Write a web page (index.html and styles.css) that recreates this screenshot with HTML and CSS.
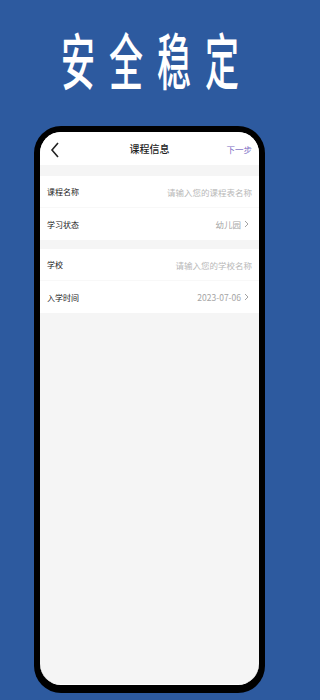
FILE: index.html
```html
<!DOCTYPE html>
<html lang="zh">
<head>
<meta charset="utf-8">
<title>课程信息</title>
<link rel="stylesheet" href="styles.css">
</head>
<body>
<div class="page">
  <header class="hero">
    <h1 class="hero-title">安全稳定</h1>
  </header>
  <div class="phone">
    <div class="screen">
      <div class="nav">
        <svg class="back" width="10" height="16" viewBox="0 0 10 16"><polyline points="8,1 2,8 8,15" fill="none" stroke="#222" stroke-width="1.6" stroke-linejoin="miter"/></svg>
        <div class="nav-title">课程信息</div>
        <div class="nav-next">下一步</div>
      </div>
      <div class="group">
        <div class="row"><span class="label">课程名称</span><span class="placeholder">请输入您的课程表名称</span></div>
        <div class="row"><span class="label">学习状态</span><span class="value">幼儿园<svg class="chev" width="5" height="8" viewBox="0 0 5 8"><polyline points="1,1 4,4 1,7" fill="none" stroke="#999" stroke-width="0.9"/></svg></span></div>
      </div>
      <div class="group">
        <div class="row"><span class="label">学校</span><span class="placeholder">请输入您的学校名称</span></div>
        <div class="row"><span class="label">入学时间</span><span class="value">2023-07-06<svg class="chev" width="5" height="8" viewBox="0 0 5 8"><polyline points="1,1 4,4 1,7" fill="none" stroke="#999" stroke-width="0.9"/></svg></span></div>
      </div>
    </div>
  </div>
</div>
</body>
</html>
```

FILE: styles.css
```css
html, body {
  margin: 0;
  padding: 0;
}
body {
  background: #2d5a9f;
  font-family: "Noto Sans CJK SC", "Noto Sans", sans-serif;
  width: 300px;
  height: 700px;
  overflow: hidden;
}
.page {
  display: flex;
  flex-direction: column;
  height: 700px;
}
.hero {
  height: 126px;
  display: flex;
  justify-content: center;
  align-items: flex-start;
}
.hero-title {
  margin: 29px 0 0 0;
  padding-left: 14px;
  font-size: 34px;
  line-height: 34px;
  font-weight: 500;
  color: #ffffff;
  letter-spacing: 14px;
  transform: scaleY(1.8);
  transform-origin: center top;
}
.phone {
  margin: 0 35px 7px 34px;
  flex: 1;
  background: #000;
  border-radius: 27px;
  padding: 6px 6px 8px 6px;
  display: flex;
}
.screen {
  flex: 1;
  background: #f5f5f5;
  border-radius: 21px;
  overflow: hidden;
  display: flex;
  flex-direction: column;
  border-bottom: 1px solid #fff;
}
.nav {
  height: 33px;
  background: #fff;
  display: flex;
  align-items: center;
  justify-content: space-between;
  padding: 0 7px 0 10px;
  position: relative;
}
.back {
  display: block;
  margin-top: 2px;
}
.nav-title {
  position: absolute;
  left: 0;
  right: 0;
  text-align: center;
  font-size: 10px;
  font-weight: 500;
  color: #222;
  pointer-events: none;
}
.nav-next {
  font-size: 8.5px;
  color: #7a6cc4;
}
.group {
  margin-top: 11px;
  background: #fff;
}
.group + .group {
  margin-top: 9px;
}
.row {
  height: 32px;
  display: flex;
  align-items: center;
  justify-content: space-between;
  padding: 0 7px 0 7px;
  box-sizing: border-box;
  border-bottom: 1px solid #f8f8f8;
}
.row:last-child {
  border-bottom: none;
}
.label {
  font-size: 8px;
  color: #222;
}
.placeholder {
  font-size: 8.5px;
  color: #b8b8b8;
}
.value {
  font-size: 8.5px;
  color: #a5a5a5;
  display: flex;
  align-items: center;
  gap: 3px;
  margin-right: 3px;
}
.chev {
  display: block;
}
```
